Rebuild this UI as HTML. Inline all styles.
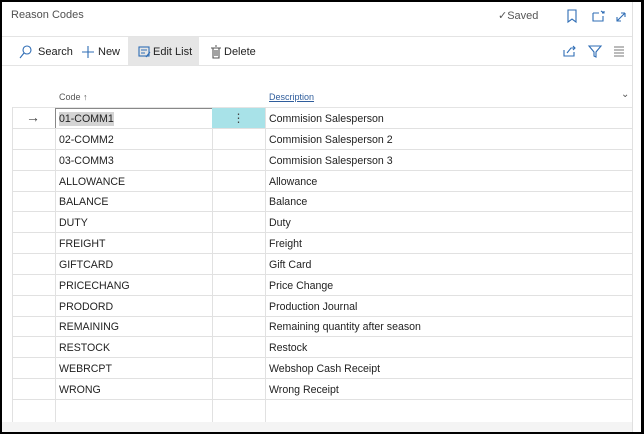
<!DOCTYPE html>
<html><head><meta charset="utf-8"><style>
*{box-sizing:border-box;margin:0;padding:0}
body{width:644px;height:434px;background:#000;font-family:"Liberation Sans",sans-serif;color:#222;font-size:10.6px;position:relative;overflow:hidden}
.frame{position:absolute;left:2px;top:2px;width:639px;height:430px;background:#fff}
.abs{position:absolute}
.hl{position:absolute;height:1px;background:#e4e4e4}
.row{position:absolute;left:12px;width:620px;height:21px;border-bottom:1px solid #e1e1e1}
.row span{position:absolute;top:5px}
.c1{left:47px}.c2{left:257px}
.vl{position:absolute;width:1px;background:#e1e1e1}
</style></head><body>
<div class="frame">
<div class="abs" style="left:9px;top:7px;font-size:11px;color:#505050">Reason Codes</div>
<div class="abs" style="left:496px;top:7px;font-size:11px;color:#555">✓Saved</div>
<svg class="abs" style="left:564px;top:6px" width="70" height="16" fill="none" stroke="#2f6db5" stroke-width="1.1">
<path d="M2 2h8v12l-4-3-4 3z"/>
<path d="M27 5h6M27 5v8h10v-5M35 3l3 2M38 3v2h-2"/>
<path d="M51 13l8-8M51 9v4h4M59 5h-4M59 5v4"/>
</svg>
<div class="hl" style="left:0;top:34px;width:630px"></div>
<div class="abs" style="left:126px;top:35px;width:71px;height:29px;background:#e6e6e6"></div>
<svg class="abs" style="left:16px;top:43px" width="240" height="14" fill="none" stroke="#2f6db5" stroke-width="1.1">
<circle cx="9" cy="5" r="4"/><path d="M6 8l-4 5"/>
<path d="M70 1v12M64 7h12"/>
<rect x="121" y="2" width="10" height="9" stroke="#2f6db5"/><path d="M123 5h6M123 8h4M128 12l4-5" />
<path d="M193 3h10M195 3v10h6v-10M197 1h2M197 5v6M199 5v6" stroke="#555"/>
</svg>
<div class="abs" style="left:36px;top:44px;font-size:11px">Search</div>
<div class="abs" style="left:96px;top:44px;font-size:11px">New</div>
<div class="abs" style="left:151px;top:44px;font-size:11px">Edit List</div>
<div class="abs" style="left:222px;top:44px;font-size:11px">Delete</div>
<svg class="abs" style="left:560px;top:42px" width="70" height="14" fill="none" stroke="#2f6db5" stroke-width="1.1">
<path d="M2 6v6h10v-4M5 9l4-5h4M11 2l2 2-2 2"/>
<path d="M27 2h12l-5 6v5l-2-1v-4z"/>
<path d="M52 3h10M52 6h10M52 9h10M52 12h10" stroke="#777"/>
</svg>
<div class="hl" style="left:0;top:63px;width:630px"></div>
<div class="abs" style="left:57px;top:90px;font-size:9px;color:#555">Code ↑</div>
<div class="abs" style="left:267px;top:90px;font-size:9px;color:#2f5d9c;text-decoration:underline">Description</div>
<div class="abs" style="left:619px;top:87px;font-size:10px;color:#555">⌄</div>
<div class="hl" style="left:10px;top:105px;width:620px"></div>
<div class="abs" style="left:10px;top:105px;width:621px;height:316px;border:1px solid #e1e1e1;border-top:none"></div>
<div class="vl" style="left:53px;top:105px;height:316px"></div>
<div class="vl" style="left:210px;top:105px;height:316px"></div>
<div class="vl" style="left:263px;top:105px;height:316px"></div>
<div class="abs" style="left:53px;top:106px;width:158px;height:21px;border:1px solid #888;background:#fff"></div>
<div class="abs" style="left:57px;top:110px;height:14px;width:55px;background:#d4d4d4"></div>
<div class="abs" style="left:210px;top:106px;width:53px;height:21px;background:#a8e2e8;text-align:center;line-height:21px;font-size:12px;color:#444">⋮</div>
<div class="abs" style="left:24px;top:107px;font-size:14px;color:#444">→</div>
<div class="row" style="left:10px;top:106px;border-top:none"><span class="c1">01-COMM1</span><span class="c2">Commision Salesperson</span></div>
<div class="row" style="left:10px;top:127px"><span class="c1">02-COMM2</span><span class="c2">Commision Salesperson 2</span></div>
<div class="row" style="left:10px;top:148px"><span class="c1">03-COMM3</span><span class="c2">Commision Salesperson 3</span></div>
<div class="row" style="left:10px;top:169px"><span class="c1">ALLOWANCE</span><span class="c2">Allowance</span></div>
<div class="row" style="left:10px;top:189px"><span class="c1">BALANCE</span><span class="c2">Balance</span></div>
<div class="row" style="left:10px;top:210px"><span class="c1">DUTY</span><span class="c2">Duty</span></div>
<div class="row" style="left:10px;top:231px"><span class="c1">FREIGHT</span><span class="c2">Freight</span></div>
<div class="row" style="left:10px;top:252px"><span class="c1">GIFTCARD</span><span class="c2">Gift Card</span></div>
<div class="row" style="left:10px;top:273px"><span class="c1">PRICECHANG</span><span class="c2">Price Change</span></div>
<div class="row" style="left:10px;top:294px"><span class="c1">PRODORD</span><span class="c2">Production Journal</span></div>
<div class="row" style="left:10px;top:314px"><span class="c1">REMAINING</span><span class="c2">Remaining quantity after season</span></div>
<div class="row" style="left:10px;top:335px"><span class="c1">RESTOCK</span><span class="c2">Restock</span></div>
<div class="row" style="left:10px;top:356px"><span class="c1">WEBRCPT</span><span class="c2">Webshop Cash Receipt</span></div>
<div class="row" style="left:10px;top:377px"><span class="c1">WRONG</span><span class="c2">Wrong Receipt</span></div>
<div class="abs" style="left:0;top:420px;width:630px;height:10px;background:#f4f4f4"></div>
<div class="abs" style="left:630px;top:0;width:1px;height:430px;background:#e0e0e0"></div>
</div>
</body></html>
